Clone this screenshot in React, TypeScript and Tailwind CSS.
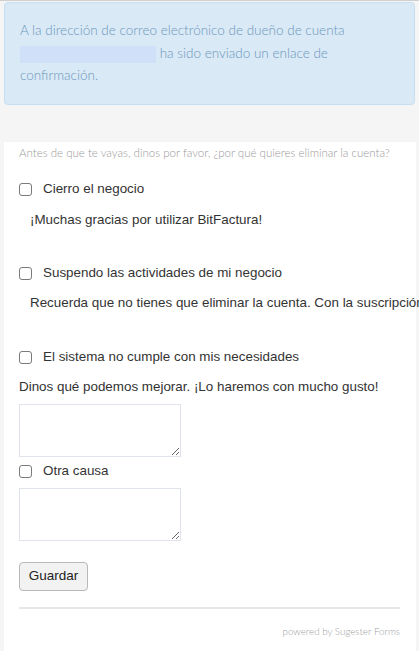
import React from "react";

const light = { fontFamily: "Lato, 'Helvetica Neue', Arial, sans-serif" };
const reg = { fontFamily: "'Liberation Sans', Arial, sans-serif" };

function Box() {
  return (
    <span className="inline-block w-[13px] h-[13px] border border-[#7a7a7a] rounded-[3px] bg-white shrink-0" />
  );
}

function Row({ label }: { label: string }) {
  return (
    <div className="flex items-center h-[20px]">
      <Box />
      <span className="ml-[11px] text-[13.4px] text-[#333]" style={reg}>
        {label}
      </span>
    </div>
  );
}

function Area() {
  return (
    <textarea className="block w-[162px] h-[53px] border border-[#dfe3ea] bg-white resize" />
  );
}

export default function App() {
  return (
    <div className="min-h-[651px] bg-[#f5f5f5] overflow-hidden w-[419px]">
      <div className="h-px bg-[#cfcfcf]" />
      <div className="ml-[4px] mr-[4px] mt-[1px] h-[103px] rounded-[4px] border border-[#c6def0] bg-[#d9e9f5] pl-[15px] pr-[10px] pt-[16px]">
        <p className="text-[13.5px] leading-[22.5px] text-[#6c97bd] font-light" style={light}>
          A la dirección de correo electrónico de dueño de cuenta{" "}
          <span className="inline-block align-middle w-[136px] h-[17px] bg-[#cfe0f8]" /> ha sido
          enviado un enlace de confirmación.
        </p>
      </div>
      <div className="mt-[37px] ml-[4px] w-[412px] bg-white pl-[15px] pt-[3px] pb-[20px]">
        <p className="text-[11.5px] leading-[16px] text-[#9a9a9a] font-light whitespace-nowrap" style={light}>
          Antes de que te vayas, dinos por favor, ¿por qué quieres eliminar la cuenta?
        </p>
        <div className="mt-[18px]">
          <Row label="Cierro el negocio" />
        </div>
        <p className="mt-[11px] ml-[11px] text-[13.4px] leading-[20px] text-[#333]" style={reg}>
          ¡Muchas gracias por utilizar BitFactura!
        </p>
        <div className="mt-[33px]">
          <Row label="Suspendo las actividades de mi negocio" />
        </div>
        <div className="mt-[10px] ml-[11px] w-[389px] overflow-hidden">
          <p className="text-[13.4px] leading-[20px] text-[#333] whitespace-nowrap" style={reg}>
            Recuerda que no tienes que eliminar la cuenta. Con la suscripción
          </p>
        </div>
        <div className="mt-[34px]">
          <Row label="El sistema no cumple con mis necesidades" />
        </div>
        <p className="mt-[10px] text-[13.4px] leading-[20px] text-[#333] whitespace-nowrap" style={reg}>
          Dinos qué podemos mejorar. ¡Lo haremos con mucho gusto!
        </p>
        <div className="mt-[7px]">
          <Area />
        </div>
        <div className="mt-[4px]">
          <Row label="Otra causa" />
        </div>
        <div className="mt-[7px]">
          <Area />
        </div>
        <button
          className="mt-[21px] h-[29px] w-[69px] rounded-[4px] border border-[#b8b8b8] bg-[#f2f2f2] text-[13.5px] text-[#222]"
          style={reg}
        >
          Guardar
        </button>
        <div className="mt-[16px] mr-[16px] h-[2px] bg-[#e6e6e6]" />
        <p className="mt-[15px] mr-[16px] text-right text-[9.8px] leading-[14px] text-[#a0a0a0] font-light" style={light}>
          powered by Sugester Forms
        </p>
      </div>
    </div>
  );
}
